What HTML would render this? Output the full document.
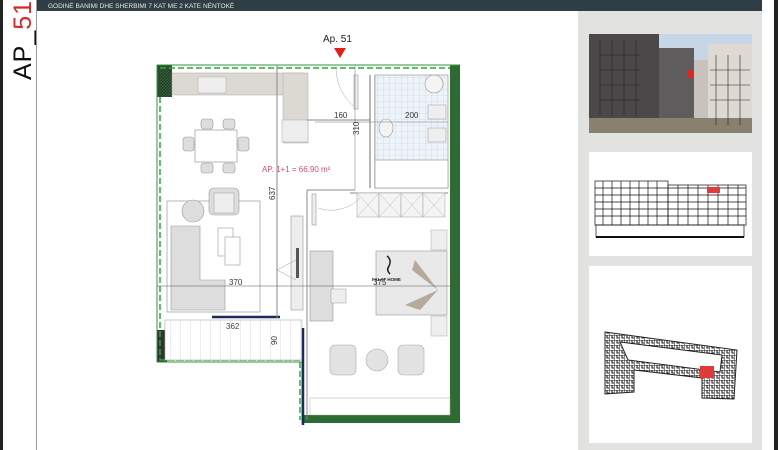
<!DOCTYPE html>
<html><head><meta charset="utf-8"><style>
html,body{margin:0;padding:0;width:778px;height:450px;overflow:hidden;background:#fff;font-family:"Liberation Sans",sans-serif}
</style></head><body>
<svg width="778" height="450" viewBox="0 0 778 450" xmlns="http://www.w3.org/2000/svg" style="position:absolute;left:0;top:0">
<defs>
<pattern id="tile" width="6" height="6" patternUnits="userSpaceOnUse"><rect width="6" height="6" fill="#eef4fa"/><path d="M6 0V6M0 6H6" stroke="#b8cde0" stroke-width="0.6"/></pattern>
<pattern id="hatch" width="3" height="3" patternUnits="userSpaceOnUse"><rect width="3" height="3" fill="#333"/><path d="M0 3L3 0" stroke="#1f7a2a" stroke-width="0.8"/></pattern>
<pattern id="stripe" width="10" height="42" patternUnits="userSpaceOnUse"><rect width="10" height="42" fill="#fff"/><path d="M0 0V42" stroke="#ccc" stroke-width="0.7"/></pattern>
<pattern id="blk" width="5" height="5" patternUnits="userSpaceOnUse"><rect width="5" height="5" fill="#fff"/><path d="M0 0H5V5M2 0V3H4" stroke="#222" stroke-width="1.1" fill="none"/></pattern>
</defs>
<rect x="0" y="0" width="3" height="450" fill="#222"/>
<rect x="36" y="0" width="1" height="450" fill="#999"/>
<text transform="translate(31,80) rotate(-90)" font-size="25" fill="#111" letter-spacing="1">AP_<tspan fill="#d42a2a">51</tspan></text>
<rect x="37" y="0" width="725" height="11" fill="#2f3d45"/>
<text x="48" y="8" font-size="6.5" fill="#e8e8e8">GODINË BANIMI DHE SHERBIMI 7 KAT ME 2 KATE NËNTOKË</text>
<rect x="762" y="0" width="12" height="450" fill="#fff"/>
<rect x="774" y="0" width="4" height="450" fill="#222"/>
<!-- right panel -->
<rect x="578" y="11" width="184" height="439" fill="#e2e2e0"/>
<rect x="589" y="34" width="163" height="99" fill="#a9a7a4"/>
<rect x="589" y="34" width="163" height="40" fill="#c7d6e6"/>
<rect x="589" y="34" width="70" height="92" fill="#4a4849"/>
<rect x="659" y="48" width="35" height="78" fill="#5e5c5c"/>
<rect x="708" y="44" width="44" height="85" fill="#dedad3"/>
<rect x="694" y="60" width="14" height="66" fill="#c8c4bd"/>
<rect x="589" y="118" width="163" height="15" fill="#8a8070"/>
<rect x="688" y="70" width="5" height="8" fill="#d42a2a"/>
<g fill="none" stroke="#222" stroke-width="0.6">
<path d="M600 40V115M612 40V115M624 40V115M636 40V115M600 55H640M600 70H640M600 85H640M600 100H640"/>
<path d="M716 55V125M728 55V125M740 55V125M710 70H750M710 85H750M710 100H750"/>
</g>
<rect x="589" y="152" width="163" height="104" fill="#fff"/>
<g fill="none" stroke="#111" stroke-width="0.7">
<rect x="595" y="181" width="73" height="44"/><rect x="668" y="185" width="78" height="40"/>
<path d="M595 188H746M595 195H746M595 202H746M595 209H746M595 216H746"/>
<path d="M603 181V225M612 181V225M621 181V225M630 181V225M639 181V225M648 181V225M657 181V225M678 185V225M688 185V225M698 185V225M708 185V225M718 185V225M728 185V225M738 185V225"/>
<rect x="596" y="225" width="148" height="12"/>
</g>
<rect x="596" y="236" width="148" height="2" fill="#111"/>
<rect x="707" y="187" width="13" height="6" fill="#e03a3a"/>
<rect x="589" y="266" width="163" height="177" fill="#fff"/>
<path d="M605 332L737 350L734 399L702 398L702 378L634 370L634 392L605 394Z" fill="url(#blk)" stroke="#222" stroke-width="1"/>
<path d="M620 342L722 355L720 372L628 360Z" fill="#fff" stroke="#222" stroke-width="1"/>
<rect x="700" y="366" width="14" height="12" fill="#e03a3a"/>
<!-- PLAN -->
<text x="323" y="42" font-size="10" fill="#222">Ap. 51</text>
<path d="M334 48H346L340 58Z" fill="#e02020"/>
<rect x="157" y="65" width="15" height="32" fill="url(#hatch)"/>
<rect x="157" y="330" width="10" height="32" fill="#333"/>
<rect x="450" y="65" width="10" height="358" fill="#2d6b33"/>
<rect x="302" y="415" width="158" height="8" fill="#2d6b33"/>
<path d="M157 65H460M157 65V362H302V423" fill="none" stroke="#2e9a3a" stroke-width="1"/>
<path d="M160 68H450M160 97V360H300V420M160 360H300" fill="none" stroke="#2fa83c" stroke-width="1.5" stroke-dasharray="6 3"/>
<rect x="172" y="73" width="131" height="22" fill="#dcd8d2" stroke="#aaa" stroke-width="0.5"/>
<rect x="283" y="73" width="25" height="70" fill="#dcd8d2" stroke="#aaa" stroke-width="0.5"/>
<rect x="198" y="77" width="28" height="16" fill="#eee" stroke="#aaa" stroke-width="0.5"/>
<rect x="282" y="120" width="26" height="22" fill="#eee" stroke="#aaa" stroke-width="0.5"/>
<rect x="195" y="130" width="42" height="32" fill="#fff" stroke="#999" stroke-width="0.7"/>
<g fill="#ddd" stroke="#999" stroke-width="0.6">
<rect x="201" y="119" width="12" height="10" rx="3"/><rect x="223" y="119" width="12" height="10" rx="3"/>
<rect x="201" y="163" width="12" height="10" rx="3"/><rect x="223" y="163" width="12" height="10" rx="3"/>
<rect x="183" y="137" width="11" height="14" rx="3"/><rect x="238" y="137" width="11" height="14" rx="3"/>
</g>
<rect x="167" y="201" width="93" height="111" fill="none" stroke="#999" stroke-width="0.7"/>
<circle cx="193" cy="211" r="11" fill="#ddd" stroke="#999" stroke-width="0.6"/>
<rect x="209" y="188" width="30" height="27" rx="5" fill="#ddd" stroke="#999" stroke-width="0.6"/>
<rect x="214" y="193" width="20" height="20" fill="#eee" stroke="#999" stroke-width="0.5"/>
<path d="M171 226H200V280H225V310H171Z" fill="#ddd" stroke="#999" stroke-width="0.6"/>
<rect x="218" y="228" width="15" height="28" fill="#fff" stroke="#999" stroke-width="0.6"/>
<rect x="225" y="237" width="15" height="28" fill="#fff" stroke="#999" stroke-width="0.6"/>
<rect x="291" y="216" width="12" height="94" fill="#eee" stroke="#999" stroke-width="0.6"/>
<rect x="296" y="248" width="3" height="30" fill="#555"/>
<path d="M277 270L296 260M277 270L296 280" stroke="#999" stroke-width="0.5" fill="none"/>
<rect x="165" y="320" width="137" height="40" fill="url(#stripe)" stroke="#aaa" stroke-width="0.6"/>
<path d="M212 317H280" stroke="#1a2a5a" stroke-width="2.5"/>
<path d="M303 328V425" stroke="#1a2a5a" stroke-width="2.5"/>
<text x="226" y="329" font-size="8" fill="#444">362</text>
<path d="M277 65V318M307 190V420M370 75V188M307 190H355M350 193H448M307 120H370" stroke="#888" stroke-width="1" fill="none"/>
<path d="M370 75V188M375 75V188" stroke="#666" stroke-width="0.8"/>
<rect x="375" y="75" width="73" height="113" fill="url(#tile)" stroke="#888" stroke-width="0.6"/>
<rect x="375" y="160" width="73" height="28" fill="#fff" stroke="#888" stroke-width="0.6"/>
<circle cx="434" cy="84" r="9" fill="#f4f4f4" stroke="#999" stroke-width="0.6"/>
<ellipse cx="386" cy="128" rx="7" ry="9" fill="#f4f4f4" stroke="#999" stroke-width="0.6"/>
<rect x="428" y="105" width="18" height="14" fill="#eee" stroke="#999" stroke-width="0.5"/>
<rect x="428" y="128" width="18" height="14" fill="#eee" stroke="#999" stroke-width="0.5"/>
<g fill="#f4f4f4" stroke="#aaa" stroke-width="0.6">
<rect x="357" y="193" width="22" height="24"/><rect x="379" y="193" width="22" height="24"/><rect x="401" y="193" width="22" height="24"/><rect x="423" y="193" width="22" height="24"/>
</g>
<path d="M357 193L379 217M379 193L357 217M379 193L401 217M401 193L379 217M401 193L423 217M423 193L401 217M423 193L445 217M445 193L423 217" stroke="#bbb" stroke-width="0.5"/>
<path d="M336 68A50 50 0 0 0 356 108M318 208A40 40 0 0 0 360 198" stroke="#aaa" stroke-width="0.5" fill="none"/>
<rect x="354" y="75" width="4" height="34" fill="#eee" stroke="#888" stroke-width="0.5"/>
<rect x="312" y="194" width="4" height="31" fill="#eee" stroke="#888" stroke-width="0.5"/>
<rect x="310" y="251" width="23" height="70" fill="#ddd" stroke="#999" stroke-width="0.6"/>
<rect x="331" y="289" width="15" height="14" fill="#eee" stroke="#999" stroke-width="0.5"/>
<rect x="376" y="251" width="71" height="64" fill="#e9e9e9" stroke="#999" stroke-width="0.6"/>
<rect x="431" y="230" width="16" height="20" fill="#eee" stroke="#aaa" stroke-width="0.5"/>
<rect x="431" y="316" width="16" height="20" fill="#eee" stroke="#aaa" stroke-width="0.5"/>
<path d="M415 260L438 290L412 270ZM405 305L438 290L420 310Z" fill="#b5ab9c"/>
<path d="M387 256Q392 260 389 266Q386 270 390 274" stroke="#222" stroke-width="1.5" fill="none"/>
<text x="372" y="281" font-size="4.5" fill="#222" font-weight="bold">FALAT HOME</text>
<g fill="#e2e2e2" stroke="#aaa" stroke-width="0.6">
<rect x="330" y="345" width="26" height="30" rx="5"/><rect x="398" y="345" width="26" height="30" rx="5"/>
</g>
<circle cx="377" cy="360" r="11" fill="#e2e2e2" stroke="#aaa" stroke-width="0.6"/>
<rect x="310" y="398" width="140" height="17" fill="#fff" stroke="#aaa" stroke-width="0.5"/>
<path d="M157 286H460" stroke="#555" stroke-width="0.6"/>
<path d="M315 122H448M355 65V190" stroke="#777" stroke-width="0.5"/>
<text x="229" y="285" font-size="8" fill="#333">370</text>
<text x="373" y="285" font-size="8" fill="#333">375</text>
<text x="334" y="118" font-size="8" fill="#333">160</text>
<text x="405" y="118" font-size="8" fill="#333">200</text>
<text x="0" y="0" font-size="8" fill="#333" transform="translate(275,200) rotate(-90)">637</text>
<text x="0" y="0" font-size="8" fill="#333" transform="translate(359,135) rotate(-90)">310</text>
<text x="0" y="0" font-size="8" fill="#333" transform="translate(277,345) rotate(-90)">90</text>
<text x="262" y="172" font-size="8" fill="#c8546a">AP. 1+1 = 66.90 m²</text>
</svg>
</body></html>
